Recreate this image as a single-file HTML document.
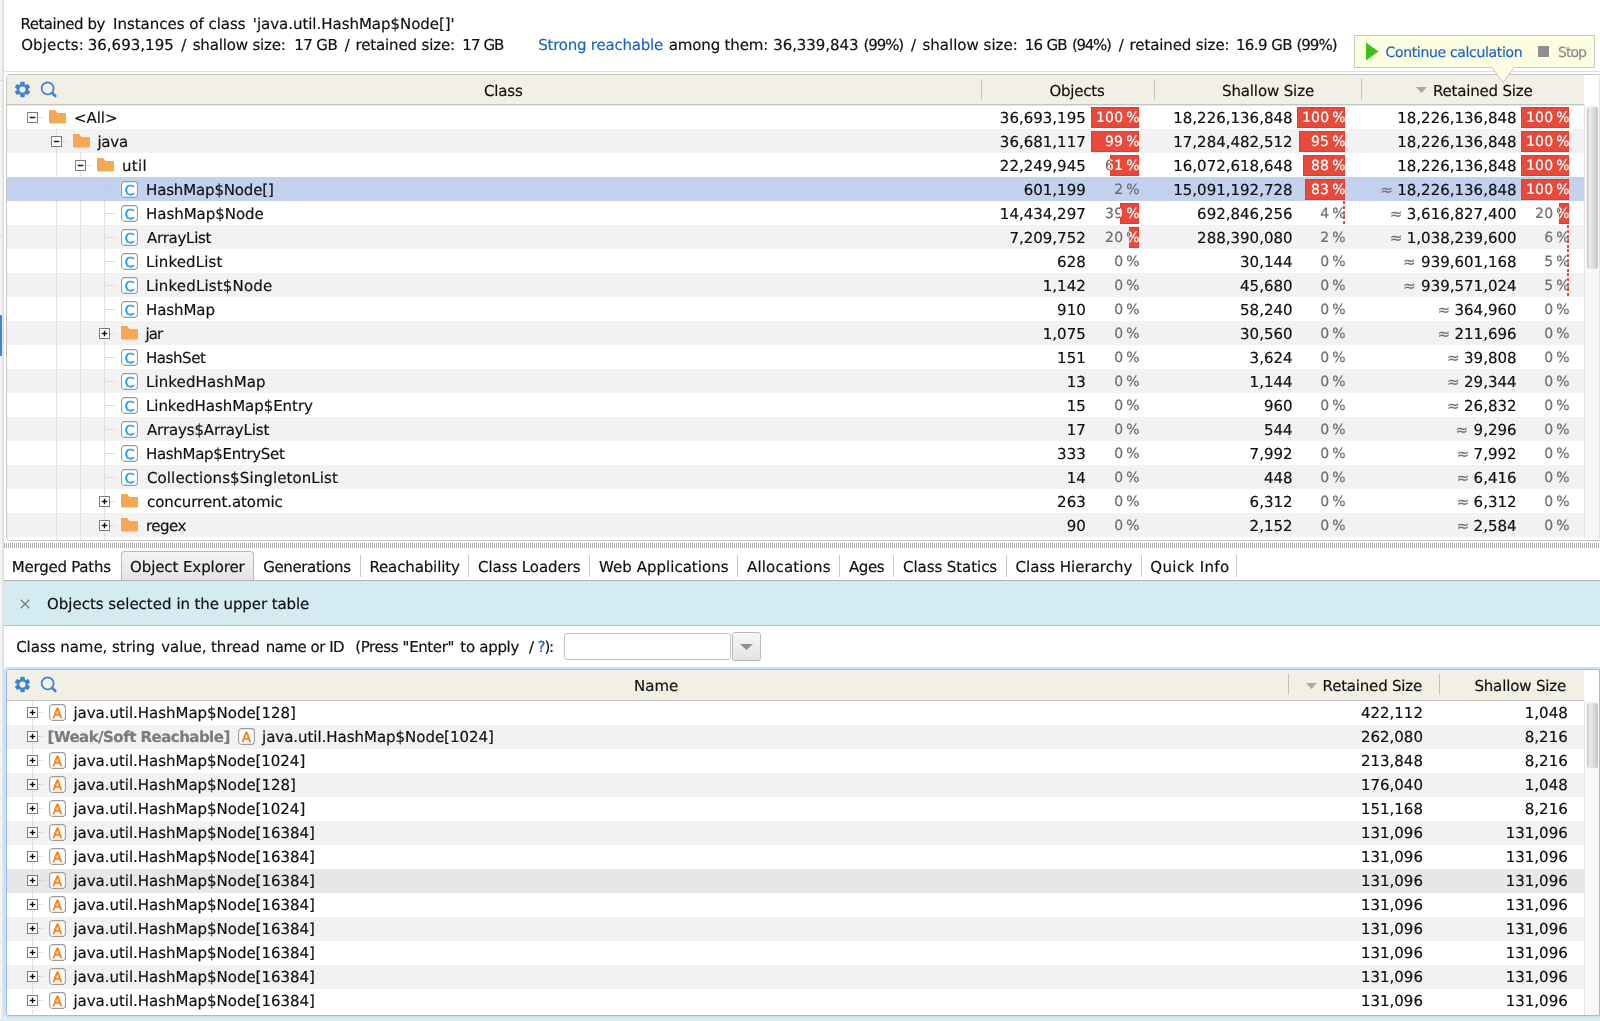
<!DOCTYPE html><html><head><meta charset="utf-8"><title>Retained objects</title><style>
html,body{margin:0;padding:0;background:#fff;}
body{width:1600px;height:1021px;position:relative;overflow:hidden;font-family:"DejaVu Sans", "Liberation Sans", sans-serif;font-size:15px;color:#101010;text-rendering:geometricPrecision;}
#root{position:absolute;left:0;top:0;width:1600px;height:1021px;will-change:transform;background:#fff;}
.a{position:absolute;}
.i{position:absolute;display:block;}
.x{position:absolute;white-space:pre;line-height:20px;height:20px;-webkit-text-stroke:0.18px currentColor;}
.bar{position:absolute;height:21px;background:#e8493b;overflow:hidden;box-shadow:inset 0 0 0 1px #e63a2a;}
.dash{position:absolute;height:24px;width:2px;background:repeating-linear-gradient(to bottom,#e8493b 0,#e8493b 3px,transparent 3px,transparent 5px);}
.hsep{position:absolute;width:1px;background:#c2c0b8;}
.tsep{position:absolute;top:555px;height:22px;width:1px;background:#c9c9c9;}
.vdot{position:absolute;width:1px;background:repeating-linear-gradient(to bottom,#c9c9c9 0,#c9c9c9 1px,transparent 1px,transparent 2px);}
.hdot{position:absolute;height:1px;background:repeating-linear-gradient(to right,#c9c9c9 0,#c9c9c9 1px,transparent 1px,transparent 2px);}

</style></head><body><div id="root">
<div class="a" style="left:0;top:0;width:2px;height:1021px;background:#f3f3f3"></div>
<div class="a" style="left:2px;top:0;width:2px;height:1021px;background:linear-gradient(to right,#e6e6e6,#dcdcdc)"></div>
<div class="a" style="left:0;top:80px;width:3px;height:1px;background:#dadada"></div>
<div class="a" style="left:0;top:235px;width:3px;height:1px;background:#dadada"></div>
<div class="a" style="left:4px;top:71px;width:1596px;height:1px;background:#dedede"></div>
<div class="a" style="left:0;top:315px;width:2px;height:41px;background:#3f84d9"></div>
<div class="x" style="left:20.40px;top:14.01px;letter-spacing:-0.466px">Retained by</div>
<div class="x" style="left:113.00px;top:14.01px;letter-spacing:-0.014px">Instances of class</div>
<div class="x" style="left:252.80px;top:14.01px;letter-spacing:-0.034px">&#x27;java.util.HashMap$Node[]&#x27;</div>
<div class="x" style="left:21.20px;top:35.01px;letter-spacing:0.119px">Objects:</div>
<div class="x" style="left:87.70px;top:35.01px;letter-spacing:0.018px">36,693,195</div>
<div class="x" style="left:181.20px;top:35.01px">/</div>
<div class="x" style="left:192.70px;top:35.01px;letter-spacing:-0.171px">shallow size:</div>
<div class="x" style="left:294.30px;top:35.01px;letter-spacing:-0.595px">17 GB</div>
<div class="x" style="left:344.70px;top:35.01px">/</div>
<div class="x" style="left:355.50px;top:35.01px;letter-spacing:-0.147px">retained size:</div>
<div class="x" style="left:462.30px;top:35.01px;letter-spacing:-0.920px">17 GB</div>
<div class="x" style="left:538.20px;top:35.01px;color:#1b64c6;letter-spacing:-0.220px">Strong reachable</div>
<div class="x" style="left:668.80px;top:35.01px;letter-spacing:-0.161px">among them:</div>
<div class="x" style="left:773.20px;top:35.01px;letter-spacing:-0.060px">36,339,843</div>
<div class="x" style="left:863.50px;top:35.01px;letter-spacing:-1.098px">(99%)</div>
<div class="x" style="left:911.10px;top:35.01px">/</div>
<div class="x" style="left:922.50px;top:35.01px;letter-spacing:0.004px">shallow size:</div>
<div class="x" style="left:1024.70px;top:35.01px;letter-spacing:-0.720px">16 GB</div>
<div class="x" style="left:1072.00px;top:35.01px;letter-spacing:-1.298px">(94%)</div>
<div class="x" style="left:1118.80px;top:35.01px">/</div>
<div class="x" style="left:1129.60px;top:35.01px;letter-spacing:-0.117px">retained size:</div>
<div class="x" style="left:1235.90px;top:35.01px;letter-spacing:-0.565px">16.9 GB</div>
<div class="x" style="left:1296.40px;top:35.01px;letter-spacing:-0.973px">(99%)</div>
<div class="a" style="left:6px;top:74px;width:1594px;height:467px;border:1px solid #c4c4c4;border-right-color:#e4e4e4;border-radius:5px 0 0 5px;box-sizing:border-box;background:#fff;overflow:hidden">
<div class="a" style="left:0;top:0;width:1577px;height:29px;background:#f2efe4"></div>
<div class="a" style="left:0;top:29px;width:1577px;height:1px;background:#c4c4c4"></div>
<div class="a" style="left:0;top:30px;width:1577px;height:1px;background:#e6e6e6"></div>
</div>
<svg class="i" style="left:13.75px;top:80.9px" width="17" height="17" viewBox="0 0 17 17"><g fill="#3b83d6"><rect x="6.3" y="0.8" width="4.4" height="15.4" rx="0.8" transform="rotate(0 8.5 8.5)"/><rect x="6.3" y="0.8" width="4.4" height="15.4" rx="0.8" transform="rotate(60 8.5 8.5)"/><rect x="6.3" y="0.8" width="4.4" height="15.4" rx="0.8" transform="rotate(120 8.5 8.5)"/><circle cx="8.5" cy="8.5" r="5.7"/></g><circle cx="8.5" cy="8.5" r="3.1" fill="#f2efe4"/></svg>
<svg class="i" style="left:40px;top:81px" width="18" height="18" viewBox="0 0 18 18"><circle cx="7.65" cy="7.4" r="6.0" fill="none" stroke="#3b83d6" stroke-width="1.7"/><path d="M12.2 11.9 L15.3 15" stroke="#3b83d6" stroke-width="2.6" stroke-linecap="round"/></svg>
<div class="x" style="left:484.00px;top:81.01px;letter-spacing:-0.162px">Class</div>
<div class="x" style="left:1049.40px;top:81.01px;letter-spacing:-0.209px">Objects</div>
<div class="x" style="left:1222.00px;top:81.01px;letter-spacing:-0.130px">Shallow Size</div>
<div class="x" style="left:1433.00px;top:81.01px;letter-spacing:-0.192px">Retained Size</div>
<svg class="i" style="left:1416px;top:87px" width="11" height="6" viewBox="0 0 11 6"><path d="M0 0H11L5.5 6Z" fill="#a9a9a9"/></svg>
<div class="hsep" style="left:981px;top:79px;height:21px"></div>
<div class="hsep" style="left:1154px;top:79px;height:21px"></div>
<div class="hsep" style="left:1361px;top:79px;height:21px"></div>
<div class="a" style="left:7px;top:129px;width:1577px;height:24px;background:#f2f2f2"></div>
<div class="a" style="left:7px;top:177px;width:1577px;height:24px;background:#c1d1ee"></div>
<div class="a" style="left:7px;top:225px;width:1577px;height:24px;background:#f2f2f2"></div>
<div class="a" style="left:7px;top:273px;width:1577px;height:24px;background:#f2f2f2"></div>
<div class="a" style="left:7px;top:321px;width:1577px;height:24px;background:#f2f2f2"></div>
<div class="a" style="left:7px;top:369px;width:1577px;height:24px;background:#f2f2f2"></div>
<div class="a" style="left:7px;top:417px;width:1577px;height:24px;background:#f2f2f2"></div>
<div class="a" style="left:7px;top:465px;width:1577px;height:24px;background:#f2f2f2"></div>
<div class="a" style="left:7px;top:513px;width:1577px;height:24px;background:#f2f2f2"></div>
<div class="vdot" style="left:56px;top:129px;height:411px"></div>
<div class="vdot" style="left:80px;top:153px;height:387px"></div>
<div class="vdot" style="left:104px;top:177px;height:363px"></div>
<svg class="i" style="left:27px;top:112px" width="11" height="11" viewBox="0 0 11 11"><rect x="0.5" y="0.5" width="10" height="10" fill="#fff" stroke="#7c7c7c" stroke-width="1"/><path d="M2.7 5.5h5.6" stroke="#111" stroke-width="1.4"/></svg>
<div class="hdot" style="left:39px;top:117px;width:6px"></div>
<svg class="i" style="left:49px;top:110px" width="17" height="14" viewBox="0 0 17 14"><path d="M0 0.9 Q0 0 0.9 0 H5.6 Q6.4 0 6.9 0.7 L8.4 3 H16.2 Q17 3 17 3.8 V12.6 Q17 13.4 16.2 13.4 H0.8 Q0 13.4 0 12.6 Z" fill="#f4a853"/></svg>
<div class="x" style="left:74.00px;top:108.01px;letter-spacing:-0.041px">&lt;All&gt;</div>
<div class="x" style="right:514.26px;top:108.01px">36,693,195</div>
<div class="x" style="right:460.20px;top:108.35px;font-size:14px;color:#6c6c6c;letter-spacing:0.200px;word-spacing:-1.6px">100 %</div>
<div class="bar" style="left:1091px;top:107px;width:48px">
<div class="x" style="right:-0.80px;top:1.35px;font-size:14px;color:#fff;letter-spacing:0.2px;word-spacing:-1.6px">100 %</div>
</div>
<div class="x" style="right:307.46px;top:108.01px">18,226,136,848</div>
<div class="x" style="right:254.20px;top:108.35px;font-size:14px;color:#6c6c6c;letter-spacing:0.200px;word-spacing:-1.6px">100 %</div>
<div class="bar" style="left:1297px;top:107px;width:48px">
<div class="x" style="right:-0.80px;top:1.35px;font-size:14px;color:#fff;letter-spacing:0.2px;word-spacing:-1.6px">100 %</div>
</div>
<div class="x" style="right:83.46px;top:108.01px">18,226,136,848</div>
<div class="x" style="right:30.20px;top:108.35px;font-size:14px;color:#6c6c6c;letter-spacing:0.200px;word-spacing:-1.6px">100 %</div>
<div class="bar" style="left:1521px;top:107px;width:48px">
<div class="x" style="right:-0.80px;top:1.35px;font-size:14px;color:#fff;letter-spacing:0.2px;word-spacing:-1.6px">100 %</div>
</div>
<svg class="i" style="left:51px;top:136px" width="11" height="11" viewBox="0 0 11 11"><rect x="0.5" y="0.5" width="10" height="10" fill="#fff" stroke="#7c7c7c" stroke-width="1"/><path d="M2.7 5.5h5.6" stroke="#111" stroke-width="1.4"/></svg>
<div class="hdot" style="left:63px;top:141px;width:6px"></div>
<svg class="i" style="left:73px;top:134px" width="17" height="14" viewBox="0 0 17 14"><path d="M0 0.9 Q0 0 0.9 0 H5.6 Q6.4 0 6.9 0.7 L8.4 3 H16.2 Q17 3 17 3.8 V12.6 Q17 13.4 16.2 13.4 H0.8 Q0 13.4 0 12.6 Z" fill="#f4a853"/></svg>
<div class="x" style="left:97.40px;top:132.01px;letter-spacing:-0.212px">java</div>
<div class="x" style="right:514.26px;top:132.01px">36,681,117</div>
<div class="x" style="right:460.20px;top:132.35px;font-size:14px;color:#6c6c6c;letter-spacing:0.200px;word-spacing:-1.6px">99 %</div>
<div class="bar" style="left:1091px;top:131px;width:48px">
<div class="x" style="right:-0.80px;top:1.35px;font-size:14px;color:#fff;letter-spacing:0.2px;word-spacing:-1.6px">99 %</div>
</div>
<div class="x" style="right:307.46px;top:132.01px">17,284,482,512</div>
<div class="x" style="right:254.20px;top:132.35px;font-size:14px;color:#6c6c6c;letter-spacing:0.200px;word-spacing:-1.6px">95 %</div>
<div class="bar" style="left:1299px;top:131px;width:46px">
<div class="x" style="right:-0.80px;top:1.35px;font-size:14px;color:#fff;letter-spacing:0.2px;word-spacing:-1.6px">95 %</div>
</div>
<div class="x" style="right:83.46px;top:132.01px">18,226,136,848</div>
<div class="x" style="right:30.20px;top:132.35px;font-size:14px;color:#6c6c6c;letter-spacing:0.200px;word-spacing:-1.6px">100 %</div>
<div class="bar" style="left:1521px;top:131px;width:48px">
<div class="x" style="right:-0.80px;top:1.35px;font-size:14px;color:#fff;letter-spacing:0.2px;word-spacing:-1.6px">100 %</div>
</div>
<svg class="i" style="left:75px;top:160px" width="11" height="11" viewBox="0 0 11 11"><rect x="0.5" y="0.5" width="10" height="10" fill="#fff" stroke="#7c7c7c" stroke-width="1"/><path d="M2.7 5.5h5.6" stroke="#111" stroke-width="1.4"/></svg>
<div class="hdot" style="left:87px;top:165px;width:6px"></div>
<svg class="i" style="left:97px;top:158px" width="17" height="14" viewBox="0 0 17 14"><path d="M0 0.9 Q0 0 0.9 0 H5.6 Q6.4 0 6.9 0.7 L8.4 3 H16.2 Q17 3 17 3.8 V12.6 Q17 13.4 16.2 13.4 H0.8 Q0 13.4 0 12.6 Z" fill="#f4a853"/></svg>
<div class="x" style="left:122.00px;top:156.01px;letter-spacing:0.348px">util</div>
<div class="x" style="right:514.26px;top:156.01px">22,249,945</div>
<div class="x" style="right:460.20px;top:156.35px;font-size:14px;color:#6c6c6c;letter-spacing:0.200px;word-spacing:-1.6px">61 %</div>
<div class="bar" style="left:1110px;top:155px;width:29px">
<div class="x" style="right:-0.80px;top:1.35px;font-size:14px;color:#fff;letter-spacing:0.2px;word-spacing:-1.6px">61 %</div>
</div>
<div class="x" style="right:307.46px;top:156.01px">16,072,618,648</div>
<div class="x" style="right:254.20px;top:156.35px;font-size:14px;color:#6c6c6c;letter-spacing:0.200px;word-spacing:-1.6px">88 %</div>
<div class="bar" style="left:1303px;top:155px;width:42px">
<div class="x" style="right:-0.80px;top:1.35px;font-size:14px;color:#fff;letter-spacing:0.2px;word-spacing:-1.6px">88 %</div>
</div>
<div class="x" style="right:83.46px;top:156.01px">18,226,136,848</div>
<div class="x" style="right:30.20px;top:156.35px;font-size:14px;color:#6c6c6c;letter-spacing:0.200px;word-spacing:-1.6px">100 %</div>
<div class="bar" style="left:1521px;top:155px;width:48px">
<div class="x" style="right:-0.80px;top:1.35px;font-size:14px;color:#fff;letter-spacing:0.2px;word-spacing:-1.6px">100 %</div>
</div>
<div class="hdot" style="left:105px;top:189px;width:12px"></div>
<svg class="i" style="left:121px;top:181px" width="17" height="17" viewBox="0 0 17 17"><rect x="0.6" y="0.6" width="15.8" height="15.8" rx="3.2" fill="#fff" stroke="#9a9a9a" stroke-width="1.1"/><text x="8.4" y="13.7" text-anchor="middle" font-family='"DejaVu Sans", "Liberation Sans", sans-serif' font-size="13.6" fill="#1fa3f6" stroke="#1fa3f6" stroke-width="0.55">C</text></svg>
<div class="x" style="left:146.00px;top:180.01px;letter-spacing:-0.153px">HashMap$Node[]</div>
<div class="x" style="right:514.26px;top:180.01px">601,199</div>
<div class="x" style="right:460.20px;top:180.35px;font-size:14px;color:#6c6c6c;letter-spacing:0.200px;word-spacing:-1.6px">2 %</div>
<div class="x" style="right:307.46px;top:180.01px">15,091,192,728</div>
<div class="x" style="right:254.20px;top:180.35px;font-size:14px;color:#6c6c6c;letter-spacing:0.200px;word-spacing:-1.6px">83 %</div>
<div class="bar" style="left:1305px;top:179px;width:40px">
<div class="x" style="right:-0.80px;top:1.35px;font-size:14px;color:#fff;letter-spacing:0.2px;word-spacing:-1.6px">83 %</div>
</div>
<div class="x" style="right:83.46px;top:180.01px">18,226,136,848</div>
<div class="x" style="right:207.17px;top:180.01px;color:#707070">≈</div>
<div class="x" style="right:30.20px;top:180.35px;font-size:14px;color:#6c6c6c;letter-spacing:0.200px;word-spacing:-1.6px">100 %</div>
<div class="bar" style="left:1521px;top:179px;width:48px">
<div class="x" style="right:-0.80px;top:1.35px;font-size:14px;color:#fff;letter-spacing:0.2px;word-spacing:-1.6px">100 %</div>
</div>
<div class="hdot" style="left:105px;top:213px;width:12px"></div>
<svg class="i" style="left:121px;top:205px" width="17" height="17" viewBox="0 0 17 17"><rect x="0.6" y="0.6" width="15.8" height="15.8" rx="3.2" fill="#fff" stroke="#9a9a9a" stroke-width="1.1"/><text x="8.4" y="13.7" text-anchor="middle" font-family='"DejaVu Sans", "Liberation Sans", sans-serif' font-size="13.6" fill="#1fa3f6" stroke="#1fa3f6" stroke-width="0.55">C</text></svg>
<div class="x" style="left:146.00px;top:204.01px;letter-spacing:-0.028px">HashMap$Node</div>
<div class="x" style="right:514.26px;top:204.01px">14,434,297</div>
<div class="x" style="right:460.20px;top:204.35px;font-size:14px;color:#6c6c6c;letter-spacing:0.200px;word-spacing:-1.6px">39 %</div>
<div class="bar" style="left:1120px;top:203px;width:19px">
<div class="x" style="right:-0.80px;top:1.35px;font-size:14px;color:#fff;letter-spacing:0.2px;word-spacing:-1.6px">39 %</div>
</div>
<div class="x" style="right:307.46px;top:204.01px">692,846,256</div>
<div class="x" style="right:254.20px;top:204.35px;font-size:14px;color:#6c6c6c;letter-spacing:0.200px;word-spacing:-1.6px">4 %</div>
<div class="dash" style="left:1343px;top:201px"></div>
<div class="x" style="right:83.46px;top:204.01px">3,616,827,400</div>
<div class="x" style="right:197.63px;top:204.01px;color:#707070">≈</div>
<div class="x" style="right:30.20px;top:204.35px;font-size:14px;color:#6c6c6c;letter-spacing:0.200px;word-spacing:-1.6px">20 %</div>
<div class="bar" style="left:1559px;top:203px;width:10px">
<div class="x" style="right:-0.80px;top:1.35px;font-size:14px;color:#fff;letter-spacing:0.2px;word-spacing:-1.6px">20 %</div>
</div>
<div class="hdot" style="left:105px;top:237px;width:12px"></div>
<svg class="i" style="left:121px;top:229px" width="17" height="17" viewBox="0 0 17 17"><rect x="0.6" y="0.6" width="15.8" height="15.8" rx="3.2" fill="#fff" stroke="#9a9a9a" stroke-width="1.1"/><text x="8.4" y="13.7" text-anchor="middle" font-family='"DejaVu Sans", "Liberation Sans", sans-serif' font-size="13.6" fill="#1fa3f6" stroke="#1fa3f6" stroke-width="0.55">C</text></svg>
<div class="x" style="left:147.00px;top:228.01px;letter-spacing:-0.267px">ArrayList</div>
<div class="x" style="right:514.26px;top:228.01px">7,209,752</div>
<div class="x" style="right:460.20px;top:228.35px;font-size:14px;color:#6c6c6c;letter-spacing:0.200px;word-spacing:-1.6px">20 %</div>
<div class="bar" style="left:1129px;top:227px;width:10px">
<div class="x" style="right:-0.80px;top:1.35px;font-size:14px;color:#fff;letter-spacing:0.2px;word-spacing:-1.6px">20 %</div>
</div>
<div class="x" style="right:307.46px;top:228.01px">288,390,080</div>
<div class="x" style="right:254.20px;top:228.35px;font-size:14px;color:#6c6c6c;letter-spacing:0.200px;word-spacing:-1.6px">2 %</div>
<div class="x" style="right:83.46px;top:228.01px">1,038,239,600</div>
<div class="x" style="right:197.63px;top:228.01px;color:#707070">≈</div>
<div class="x" style="right:30.20px;top:228.35px;font-size:14px;color:#6c6c6c;letter-spacing:0.200px;word-spacing:-1.6px">6 %</div>
<div class="dash" style="left:1567px;top:225px"></div>
<div class="hdot" style="left:105px;top:261px;width:12px"></div>
<svg class="i" style="left:121px;top:253px" width="17" height="17" viewBox="0 0 17 17"><rect x="0.6" y="0.6" width="15.8" height="15.8" rx="3.2" fill="#fff" stroke="#9a9a9a" stroke-width="1.1"/><text x="8.4" y="13.7" text-anchor="middle" font-family='"DejaVu Sans", "Liberation Sans", sans-serif' font-size="13.6" fill="#1fa3f6" stroke="#1fa3f6" stroke-width="0.55">C</text></svg>
<div class="x" style="left:146.00px;top:252.01px;letter-spacing:0.125px">LinkedList</div>
<div class="x" style="right:514.26px;top:252.01px">628</div>
<div class="x" style="right:460.20px;top:252.35px;font-size:14px;color:#6c6c6c;letter-spacing:0.200px;word-spacing:-1.6px">0 %</div>
<div class="x" style="right:307.46px;top:252.01px">30,144</div>
<div class="x" style="right:254.20px;top:252.35px;font-size:14px;color:#6c6c6c;letter-spacing:0.200px;word-spacing:-1.6px">0 %</div>
<div class="x" style="right:83.46px;top:252.01px">939,601,168</div>
<div class="x" style="right:184.32px;top:252.01px;color:#707070">≈</div>
<div class="x" style="right:30.20px;top:252.35px;font-size:14px;color:#6c6c6c;letter-spacing:0.200px;word-spacing:-1.6px">5 %</div>
<div class="dash" style="left:1567px;top:249px"></div>
<div class="hdot" style="left:105px;top:285px;width:12px"></div>
<svg class="i" style="left:121px;top:277px" width="17" height="17" viewBox="0 0 17 17"><rect x="0.6" y="0.6" width="15.8" height="15.8" rx="3.2" fill="#fff" stroke="#9a9a9a" stroke-width="1.1"/><text x="8.4" y="13.7" text-anchor="middle" font-family='"DejaVu Sans", "Liberation Sans", sans-serif' font-size="13.6" fill="#1fa3f6" stroke="#1fa3f6" stroke-width="0.55">C</text></svg>
<div class="x" style="left:146.00px;top:276.01px;letter-spacing:0.170px">LinkedList$Node</div>
<div class="x" style="right:514.26px;top:276.01px">1,142</div>
<div class="x" style="right:460.20px;top:276.35px;font-size:14px;color:#6c6c6c;letter-spacing:0.200px;word-spacing:-1.6px">0 %</div>
<div class="x" style="right:307.46px;top:276.01px">45,680</div>
<div class="x" style="right:254.20px;top:276.35px;font-size:14px;color:#6c6c6c;letter-spacing:0.200px;word-spacing:-1.6px">0 %</div>
<div class="x" style="right:83.46px;top:276.01px">939,571,024</div>
<div class="x" style="right:184.32px;top:276.01px;color:#707070">≈</div>
<div class="x" style="right:30.20px;top:276.35px;font-size:14px;color:#6c6c6c;letter-spacing:0.200px;word-spacing:-1.6px">5 %</div>
<div class="dash" style="left:1567px;top:273px"></div>
<div class="hdot" style="left:105px;top:309px;width:12px"></div>
<svg class="i" style="left:121px;top:301px" width="17" height="17" viewBox="0 0 17 17"><rect x="0.6" y="0.6" width="15.8" height="15.8" rx="3.2" fill="#fff" stroke="#9a9a9a" stroke-width="1.1"/><text x="8.4" y="13.7" text-anchor="middle" font-family='"DejaVu Sans", "Liberation Sans", sans-serif' font-size="13.6" fill="#1fa3f6" stroke="#1fa3f6" stroke-width="0.55">C</text></svg>
<div class="x" style="left:146.00px;top:300.01px;letter-spacing:-0.088px">HashMap</div>
<div class="x" style="right:514.26px;top:300.01px">910</div>
<div class="x" style="right:460.20px;top:300.35px;font-size:14px;color:#6c6c6c;letter-spacing:0.200px;word-spacing:-1.6px">0 %</div>
<div class="x" style="right:307.46px;top:300.01px">58,240</div>
<div class="x" style="right:254.20px;top:300.35px;font-size:14px;color:#6c6c6c;letter-spacing:0.200px;word-spacing:-1.6px">0 %</div>
<div class="x" style="right:83.46px;top:300.01px">364,960</div>
<div class="x" style="right:149.92px;top:300.01px;color:#707070">≈</div>
<div class="x" style="right:30.20px;top:300.35px;font-size:14px;color:#6c6c6c;letter-spacing:0.200px;word-spacing:-1.6px">0 %</div>
<svg class="i" style="left:99px;top:328px" width="11" height="11" viewBox="0 0 11 11"><rect x="0.5" y="0.5" width="10" height="10" fill="#fff" stroke="#7c7c7c" stroke-width="1"/><path d="M2.7 5.5h5.6" stroke="#111" stroke-width="1.4"/><path d="M5.5 2.7v5.6" stroke="#111" stroke-width="1.4"/></svg>
<div class="hdot" style="left:111px;top:333px;width:6px"></div>
<svg class="i" style="left:121px;top:326px" width="17" height="14" viewBox="0 0 17 14"><path d="M0 0.9 Q0 0 0.9 0 H5.6 Q6.4 0 6.9 0.7 L8.4 3 H16.2 Q17 3 17 3.8 V12.6 Q17 13.4 16.2 13.4 H0.8 Q0 13.4 0 12.6 Z" fill="#f4a853"/></svg>
<div class="x" style="left:145.40px;top:324.01px;letter-spacing:-0.880px">jar</div>
<div class="x" style="right:514.26px;top:324.01px">1,075</div>
<div class="x" style="right:460.20px;top:324.35px;font-size:14px;color:#6c6c6c;letter-spacing:0.200px;word-spacing:-1.6px">0 %</div>
<div class="x" style="right:307.46px;top:324.01px">30,560</div>
<div class="x" style="right:254.20px;top:324.35px;font-size:14px;color:#6c6c6c;letter-spacing:0.200px;word-spacing:-1.6px">0 %</div>
<div class="x" style="right:83.46px;top:324.01px">211,696</div>
<div class="x" style="right:149.92px;top:324.01px;color:#707070">≈</div>
<div class="x" style="right:30.20px;top:324.35px;font-size:14px;color:#6c6c6c;letter-spacing:0.200px;word-spacing:-1.6px">0 %</div>
<div class="hdot" style="left:105px;top:357px;width:12px"></div>
<svg class="i" style="left:121px;top:349px" width="17" height="17" viewBox="0 0 17 17"><rect x="0.6" y="0.6" width="15.8" height="15.8" rx="3.2" fill="#fff" stroke="#9a9a9a" stroke-width="1.1"/><text x="8.4" y="13.7" text-anchor="middle" font-family='"DejaVu Sans", "Liberation Sans", sans-serif' font-size="13.6" fill="#1fa3f6" stroke="#1fa3f6" stroke-width="0.55">C</text></svg>
<div class="x" style="left:146.00px;top:348.01px;letter-spacing:-0.424px">HashSet</div>
<div class="x" style="right:514.26px;top:348.01px">151</div>
<div class="x" style="right:460.20px;top:348.35px;font-size:14px;color:#6c6c6c;letter-spacing:0.200px;word-spacing:-1.6px">0 %</div>
<div class="x" style="right:307.46px;top:348.01px">3,624</div>
<div class="x" style="right:254.20px;top:348.35px;font-size:14px;color:#6c6c6c;letter-spacing:0.200px;word-spacing:-1.6px">0 %</div>
<div class="x" style="right:83.46px;top:348.01px">39,808</div>
<div class="x" style="right:140.37px;top:348.01px;color:#707070">≈</div>
<div class="x" style="right:30.20px;top:348.35px;font-size:14px;color:#6c6c6c;letter-spacing:0.200px;word-spacing:-1.6px">0 %</div>
<div class="hdot" style="left:105px;top:381px;width:12px"></div>
<svg class="i" style="left:121px;top:373px" width="17" height="17" viewBox="0 0 17 17"><rect x="0.6" y="0.6" width="15.8" height="15.8" rx="3.2" fill="#fff" stroke="#9a9a9a" stroke-width="1.1"/><text x="8.4" y="13.7" text-anchor="middle" font-family='"DejaVu Sans", "Liberation Sans", sans-serif' font-size="13.6" fill="#1fa3f6" stroke="#1fa3f6" stroke-width="0.55">C</text></svg>
<div class="x" style="left:146.00px;top:372.01px;letter-spacing:0.095px">LinkedHashMap</div>
<div class="x" style="right:514.26px;top:372.01px">13</div>
<div class="x" style="right:460.20px;top:372.35px;font-size:14px;color:#6c6c6c;letter-spacing:0.200px;word-spacing:-1.6px">0 %</div>
<div class="x" style="right:307.46px;top:372.01px">1,144</div>
<div class="x" style="right:254.20px;top:372.35px;font-size:14px;color:#6c6c6c;letter-spacing:0.200px;word-spacing:-1.6px">0 %</div>
<div class="x" style="right:83.46px;top:372.01px">29,344</div>
<div class="x" style="right:140.37px;top:372.01px;color:#707070">≈</div>
<div class="x" style="right:30.20px;top:372.35px;font-size:14px;color:#6c6c6c;letter-spacing:0.200px;word-spacing:-1.6px">0 %</div>
<div class="hdot" style="left:105px;top:405px;width:12px"></div>
<svg class="i" style="left:121px;top:397px" width="17" height="17" viewBox="0 0 17 17"><rect x="0.6" y="0.6" width="15.8" height="15.8" rx="3.2" fill="#fff" stroke="#9a9a9a" stroke-width="1.1"/><text x="8.4" y="13.7" text-anchor="middle" font-family='"DejaVu Sans", "Liberation Sans", sans-serif' font-size="13.6" fill="#1fa3f6" stroke="#1fa3f6" stroke-width="0.55">C</text></svg>
<div class="x" style="left:146.00px;top:396.01px;letter-spacing:-0.053px">LinkedHashMap$Entry</div>
<div class="x" style="right:514.26px;top:396.01px">15</div>
<div class="x" style="right:460.20px;top:396.35px;font-size:14px;color:#6c6c6c;letter-spacing:0.200px;word-spacing:-1.6px">0 %</div>
<div class="x" style="right:307.46px;top:396.01px">960</div>
<div class="x" style="right:254.20px;top:396.35px;font-size:14px;color:#6c6c6c;letter-spacing:0.200px;word-spacing:-1.6px">0 %</div>
<div class="x" style="right:83.46px;top:396.01px">26,832</div>
<div class="x" style="right:140.37px;top:396.01px;color:#707070">≈</div>
<div class="x" style="right:30.20px;top:396.35px;font-size:14px;color:#6c6c6c;letter-spacing:0.200px;word-spacing:-1.6px">0 %</div>
<div class="hdot" style="left:105px;top:429px;width:12px"></div>
<svg class="i" style="left:121px;top:421px" width="17" height="17" viewBox="0 0 17 17"><rect x="0.6" y="0.6" width="15.8" height="15.8" rx="3.2" fill="#fff" stroke="#9a9a9a" stroke-width="1.1"/><text x="8.4" y="13.7" text-anchor="middle" font-family='"DejaVu Sans", "Liberation Sans", sans-serif' font-size="13.6" fill="#1fa3f6" stroke="#1fa3f6" stroke-width="0.55">C</text></svg>
<div class="x" style="left:147.00px;top:420.01px;letter-spacing:-0.140px">Arrays$ArrayList</div>
<div class="x" style="right:514.26px;top:420.01px">17</div>
<div class="x" style="right:460.20px;top:420.35px;font-size:14px;color:#6c6c6c;letter-spacing:0.200px;word-spacing:-1.6px">0 %</div>
<div class="x" style="right:307.46px;top:420.01px">544</div>
<div class="x" style="right:254.20px;top:420.35px;font-size:14px;color:#6c6c6c;letter-spacing:0.200px;word-spacing:-1.6px">0 %</div>
<div class="x" style="right:83.46px;top:420.01px">9,296</div>
<div class="x" style="right:131.83px;top:420.01px;color:#707070">≈</div>
<div class="x" style="right:30.20px;top:420.35px;font-size:14px;color:#6c6c6c;letter-spacing:0.200px;word-spacing:-1.6px">0 %</div>
<div class="hdot" style="left:105px;top:453px;width:12px"></div>
<svg class="i" style="left:121px;top:445px" width="17" height="17" viewBox="0 0 17 17"><rect x="0.6" y="0.6" width="15.8" height="15.8" rx="3.2" fill="#fff" stroke="#9a9a9a" stroke-width="1.1"/><text x="8.4" y="13.7" text-anchor="middle" font-family='"DejaVu Sans", "Liberation Sans", sans-serif' font-size="13.6" fill="#1fa3f6" stroke="#1fa3f6" stroke-width="0.55">C</text></svg>
<div class="x" style="left:146.00px;top:444.01px;letter-spacing:-0.310px">HashMap$EntrySet</div>
<div class="x" style="right:514.26px;top:444.01px">333</div>
<div class="x" style="right:460.20px;top:444.35px;font-size:14px;color:#6c6c6c;letter-spacing:0.200px;word-spacing:-1.6px">0 %</div>
<div class="x" style="right:307.46px;top:444.01px">7,992</div>
<div class="x" style="right:254.20px;top:444.35px;font-size:14px;color:#6c6c6c;letter-spacing:0.200px;word-spacing:-1.6px">0 %</div>
<div class="x" style="right:83.46px;top:444.01px">7,992</div>
<div class="x" style="right:130.83px;top:444.01px;color:#707070">≈</div>
<div class="x" style="right:30.20px;top:444.35px;font-size:14px;color:#6c6c6c;letter-spacing:0.200px;word-spacing:-1.6px">0 %</div>
<div class="hdot" style="left:105px;top:477px;width:12px"></div>
<svg class="i" style="left:121px;top:469px" width="17" height="17" viewBox="0 0 17 17"><rect x="0.6" y="0.6" width="15.8" height="15.8" rx="3.2" fill="#fff" stroke="#9a9a9a" stroke-width="1.1"/><text x="8.4" y="13.7" text-anchor="middle" font-family='"DejaVu Sans", "Liberation Sans", sans-serif' font-size="13.6" fill="#1fa3f6" stroke="#1fa3f6" stroke-width="0.55">C</text></svg>
<div class="x" style="left:147.00px;top:468.01px;letter-spacing:0.101px">Collections$SingletonList</div>
<div class="x" style="right:514.26px;top:468.01px">14</div>
<div class="x" style="right:460.20px;top:468.35px;font-size:14px;color:#6c6c6c;letter-spacing:0.200px;word-spacing:-1.6px">0 %</div>
<div class="x" style="right:307.46px;top:468.01px">448</div>
<div class="x" style="right:254.20px;top:468.35px;font-size:14px;color:#6c6c6c;letter-spacing:0.200px;word-spacing:-1.6px">0 %</div>
<div class="x" style="right:83.46px;top:468.01px">6,416</div>
<div class="x" style="right:130.83px;top:468.01px;color:#707070">≈</div>
<div class="x" style="right:30.20px;top:468.35px;font-size:14px;color:#6c6c6c;letter-spacing:0.200px;word-spacing:-1.6px">0 %</div>
<svg class="i" style="left:99px;top:496px" width="11" height="11" viewBox="0 0 11 11"><rect x="0.5" y="0.5" width="10" height="10" fill="#fff" stroke="#7c7c7c" stroke-width="1"/><path d="M2.7 5.5h5.6" stroke="#111" stroke-width="1.4"/><path d="M5.5 2.7v5.6" stroke="#111" stroke-width="1.4"/></svg>
<div class="hdot" style="left:111px;top:501px;width:6px"></div>
<svg class="i" style="left:121px;top:494px" width="17" height="14" viewBox="0 0 17 14"><path d="M0 0.9 Q0 0 0.9 0 H5.6 Q6.4 0 6.9 0.7 L8.4 3 H16.2 Q17 3 17 3.8 V12.6 Q17 13.4 16.2 13.4 H0.8 Q0 13.4 0 12.6 Z" fill="#f4a853"/></svg>
<div class="x" style="left:147.00px;top:492.01px;letter-spacing:-0.078px">concurrent.atomic</div>
<div class="x" style="right:514.26px;top:492.01px">263</div>
<div class="x" style="right:460.20px;top:492.35px;font-size:14px;color:#6c6c6c;letter-spacing:0.200px;word-spacing:-1.6px">0 %</div>
<div class="x" style="right:307.46px;top:492.01px">6,312</div>
<div class="x" style="right:254.20px;top:492.35px;font-size:14px;color:#6c6c6c;letter-spacing:0.200px;word-spacing:-1.6px">0 %</div>
<div class="x" style="right:83.46px;top:492.01px">6,312</div>
<div class="x" style="right:130.83px;top:492.01px;color:#707070">≈</div>
<div class="x" style="right:30.20px;top:492.35px;font-size:14px;color:#6c6c6c;letter-spacing:0.200px;word-spacing:-1.6px">0 %</div>
<svg class="i" style="left:99px;top:520px" width="11" height="11" viewBox="0 0 11 11"><rect x="0.5" y="0.5" width="10" height="10" fill="#fff" stroke="#7c7c7c" stroke-width="1"/><path d="M2.7 5.5h5.6" stroke="#111" stroke-width="1.4"/><path d="M5.5 2.7v5.6" stroke="#111" stroke-width="1.4"/></svg>
<div class="hdot" style="left:111px;top:525px;width:6px"></div>
<svg class="i" style="left:121px;top:518px" width="17" height="14" viewBox="0 0 17 14"><path d="M0 0.9 Q0 0 0.9 0 H5.6 Q6.4 0 6.9 0.7 L8.4 3 H16.2 Q17 3 17 3.8 V12.6 Q17 13.4 16.2 13.4 H0.8 Q0 13.4 0 12.6 Z" fill="#f4a853"/></svg>
<div class="x" style="left:146.00px;top:516.01px;letter-spacing:-0.538px">regex</div>
<div class="x" style="right:514.26px;top:516.01px">90</div>
<div class="x" style="right:460.20px;top:516.35px;font-size:14px;color:#6c6c6c;letter-spacing:0.200px;word-spacing:-1.6px">0 %</div>
<div class="x" style="right:307.46px;top:516.01px">2,152</div>
<div class="x" style="right:254.20px;top:516.35px;font-size:14px;color:#6c6c6c;letter-spacing:0.200px;word-spacing:-1.6px">0 %</div>
<div class="x" style="right:83.46px;top:516.01px">2,584</div>
<div class="x" style="right:130.83px;top:516.01px;color:#707070">≈</div>
<div class="x" style="right:30.20px;top:516.35px;font-size:14px;color:#6c6c6c;letter-spacing:0.200px;word-spacing:-1.6px">0 %</div>
<div class="a" style="left:1584px;top:105px;width:15px;height:433px;background:#f7f7f7;border-left:1px solid #e6e6e6;border-bottom:1px solid #ececec;box-sizing:border-box"></div>
<div class="a" style="left:1587px;top:107px;width:11px;height:162px;background:linear-gradient(to right,#c2c2c2,#e9e9e9 22%,#dddddd 60%,#c4c4c4);border-radius:2.5px"></div>
<div class="a" style="left:1354px;top:35px;width:241px;height:33px;box-sizing:border-box;border:1px solid #c8c8c0;background:#fdfde1"></div>
<svg class="i" style="left:1491px;top:66px" width="24" height="18" viewBox="0 0 24 18"><path d="M0 0H24V1.5H23L12 16.5 1 1.5H0Z" fill="#fdfde1"/><path d="M0 1.5 H1 L12 16.5 L23 1.5 H24" fill="none" stroke="#c8c8c0" stroke-width="1"/></svg>
<svg class="i" style="left:1366px;top:42px" width="13" height="19" viewBox="0 0 13 19"><path d="M0 0.5L12.5 9.5 0 18.5Z" fill="#3fc01a"/></svg>
<div class="x" style="left:1385.50px;top:43.35px;font-size:14px;color:#1b64c6;letter-spacing:-0.334px">Continue calculation</div>
<div class="a" style="left:1538px;top:46px;width:11px;height:11px;background:#8f8f8f"></div>
<div class="x" style="left:1558.00px;top:43.35px;font-size:14px;color:#8c8c8c;letter-spacing:-0.980px">Stop</div>
<div class="a" style="left:4px;top:543px;width:1596px;height:5px;background:repeating-linear-gradient(to right,#a2a2a2 0,#a2a2a2 1px,#fff 1px,#fff 2px);opacity:0.9"></div>
<div class="a" style="left:121px;top:551px;width:133px;height:30px;box-sizing:border-box;border:1px solid #b8b8b8;border-bottom:none;border-radius:4px 4px 0 0;background:linear-gradient(#f3f3f3,#e3e3e3)"></div>
<div class="x" style="left:11.80px;top:557.01px;letter-spacing:-0.242px">Merged Paths</div>
<div class="x" style="left:130.00px;top:557.01px;letter-spacing:-0.093px">Object Explorer</div>
<div class="x" style="left:263.20px;top:557.01px;letter-spacing:-0.368px">Generations</div>
<div class="x" style="left:369.40px;top:557.01px;letter-spacing:-0.129px">Reachability</div>
<div class="x" style="left:478.00px;top:557.01px;letter-spacing:-0.068px">Class Loaders</div>
<div class="x" style="left:599.10px;top:557.01px;letter-spacing:0.021px">Web Applications</div>
<div class="x" style="left:747.00px;top:557.01px;letter-spacing:0.175px">Allocations</div>
<div class="x" style="left:849.00px;top:557.01px;letter-spacing:-0.437px">Ages</div>
<div class="x" style="left:903.00px;top:557.01px;letter-spacing:-0.068px">Class Statics</div>
<div class="x" style="left:1015.60px;top:557.01px">Class Hierarchy</div>
<div class="x" style="left:1150.30px;top:557.01px;letter-spacing:0.367px">Quick Info</div>
<div class="tsep" style="left:360px"></div>
<div class="tsep" style="left:468px"></div>
<div class="tsep" style="left:589px"></div>
<div class="tsep" style="left:737px"></div>
<div class="tsep" style="left:839px"></div>
<div class="tsep" style="left:893px"></div>
<div class="tsep" style="left:1006px"></div>
<div class="tsep" style="left:1141px"></div>
<div class="tsep" style="left:1236px"></div>
<div class="a" style="left:4px;top:580px;width:1596px;height:1px;background:#b2b2b2"></div>
<div class="a" style="left:4px;top:581px;width:1596px;height:44px;background:#d4ebf2"></div>
<div class="a" style="left:4px;top:625px;width:1596px;height:1px;background:#bdbdbd"></div>
<svg class="i" style="left:20px;top:599px" width="10" height="10" viewBox="0 0 10 10"><path d="M0.7 0.7L9.3 9.3M9.3 0.7L0.7 9.3" stroke="#7a7a7a" stroke-width="1.3"/></svg>
<div class="x" style="left:47.10px;top:594.01px;letter-spacing:-0.029px">Objects selected</div>
<div class="x" style="left:176.40px;top:594.01px;letter-spacing:-0.100px">in the upper table</div>
<div class="x" style="left:16.20px;top:637.01px;letter-spacing:-0.038px">Class name, string</div>
<div class="x" style="left:161.30px;top:637.01px;letter-spacing:-0.104px">value, thread</div>
<div class="x" style="left:265.80px;top:637.01px;letter-spacing:-0.505px">name or ID</div>
<div class="x" style="left:355.20px;top:637.01px;letter-spacing:-0.381px">(Press &quot;Enter&quot;</div>
<div class="x" style="left:460.30px;top:637.01px;letter-spacing:-0.290px">to apply</div>
<div class="x" style="left:529.00px;top:637.01px">/</div>
<div class="x" style="left:537.60px;top:637.01px;color:#1b64c6">?</div>
<div class="x" style="left:544.60px;top:637.01px;letter-spacing:-1.352px">):</div>
<div class="a" style="left:564px;top:633px;width:167px;height:27px;box-sizing:border-box;border:1px solid #c3c3c3;border-radius:3px;background:#fff"></div>
<div class="a" style="left:732px;top:632px;width:29px;height:29px;box-sizing:border-box;border:1px solid #b9b9b9;border-radius:3px;background:linear-gradient(#f6f6f6,#e4e4e4)"></div>
<svg class="i" style="left:740px;top:644px" width="13" height="6" viewBox="0 0 13 6"><path d="M0 0H13L6.5 6Z" fill="#8f8f8f"/></svg>
<div class="a" style="left:4px;top:667px;width:1610px;height:351px;border:2px solid #c9e2fb;border-radius:4px;box-sizing:border-box"></div>
<div class="a" style="left:6px;top:669px;width:1594px;height:347px;border:1px solid #9db8f8;border-radius:3px 0 0 3px;box-sizing:border-box;background:#fff;overflow:hidden">
<div class="a" style="left:0;top:0;width:1577px;height:30px;background:#f2efe4"></div>
<div class="a" style="left:0;top:30px;width:1577px;height:1px;background:#c6c6c6"></div>
</div>
<svg class="i" style="left:13.75px;top:675.9px" width="17" height="17" viewBox="0 0 17 17"><g fill="#3b83d6"><rect x="6.3" y="0.8" width="4.4" height="15.4" rx="0.8" transform="rotate(0 8.5 8.5)"/><rect x="6.3" y="0.8" width="4.4" height="15.4" rx="0.8" transform="rotate(60 8.5 8.5)"/><rect x="6.3" y="0.8" width="4.4" height="15.4" rx="0.8" transform="rotate(120 8.5 8.5)"/><circle cx="8.5" cy="8.5" r="5.7"/></g><circle cx="8.5" cy="8.5" r="3.1" fill="#f2efe4"/></svg>
<svg class="i" style="left:40px;top:676px" width="18" height="18" viewBox="0 0 18 18"><circle cx="7.65" cy="7.4" r="6.0" fill="none" stroke="#3b83d6" stroke-width="1.7"/><path d="M12.2 11.9 L15.3 15" stroke="#3b83d6" stroke-width="2.6" stroke-linecap="round"/></svg>
<div class="x" style="left:634.00px;top:676.01px;letter-spacing:-0.008px">Name</div>
<div class="x" style="left:1322.60px;top:676.01px;letter-spacing:-0.200px">Retained Size</div>
<div class="x" style="left:1474.40px;top:676.01px;letter-spacing:-0.157px">Shallow Size</div>
<svg class="i" style="left:1306px;top:683px" width="11" height="6" viewBox="0 0 11 6"><path d="M0 0H11L5.5 6Z" fill="#a9a9a9"/></svg>
<div class="hsep" style="left:1288px;top:674px;height:21px"></div>
<div class="hsep" style="left:1439px;top:674px;height:21px"></div>
<div class="a" style="left:7px;top:725px;width:1577px;height:24px;background:#f2f2f2"></div>
<div class="a" style="left:7px;top:773px;width:1577px;height:24px;background:#f2f2f2"></div>
<div class="a" style="left:7px;top:821px;width:1577px;height:24px;background:#f2f2f2"></div>
<div class="a" style="left:7px;top:869px;width:1577px;height:24px;background:#e7e7e7"></div>
<div class="a" style="left:7px;top:917px;width:1577px;height:24px;background:#f2f2f2"></div>
<div class="a" style="left:7px;top:965px;width:1577px;height:24px;background:#f2f2f2"></div>
<div class="vdot" style="left:32px;top:701px;height:314px"></div>
<svg class="i" style="left:27px;top:707px" width="11" height="11" viewBox="0 0 11 11"><rect x="0.5" y="0.5" width="10" height="10" fill="#fff" stroke="#7c7c7c" stroke-width="1"/><path d="M2.7 5.5h5.6" stroke="#111" stroke-width="1.4"/><path d="M5.5 2.7v5.6" stroke="#111" stroke-width="1.4"/></svg>
<div class="hdot" style="left:39px;top:712px;width:6px"></div>
<svg class="i" style="left:49px;top:704px" width="17" height="17" viewBox="0 0 17 17"><rect x="0.6" y="0.6" width="15.8" height="15.8" rx="3.2" fill="#fff" stroke="#9a9a9a" stroke-width="1.1"/><text x="8.4" y="13.7" text-anchor="middle" font-family='"DejaVu Sans", "Liberation Sans", sans-serif' font-size="13.6" fill="#ff7d12" stroke="#ff7d12" stroke-width="0.55">A</text></svg>
<div class="x" style="left:73.40px;top:703.01px;letter-spacing:-0.027px">java.util.HashMap$Node[128]</div>
<div class="x" style="right:177.06px;top:703.01px">422,112</div>
<div class="x" style="right:32.26px;top:703.01px">1,048</div>
<svg class="i" style="left:27px;top:731px" width="11" height="11" viewBox="0 0 11 11"><rect x="0.5" y="0.5" width="10" height="10" fill="#fff" stroke="#7c7c7c" stroke-width="1"/><path d="M2.7 5.5h5.6" stroke="#111" stroke-width="1.4"/><path d="M5.5 2.7v5.6" stroke="#111" stroke-width="1.4"/></svg>
<div class="hdot" style="left:39px;top:736px;width:6px"></div>
<div class="x" style="left:47.60px;top:727.01px;color:#7b7b7b;font-weight:bold;letter-spacing:-0.522px">[Weak/Soft Reachable]</div>
<svg class="i" style="left:238px;top:728px" width="17" height="17" viewBox="0 0 17 17"><rect x="0.6" y="0.6" width="15.8" height="15.8" rx="3.2" fill="#fff" stroke="#9a9a9a" stroke-width="1.1"/><text x="8.4" y="13.7" text-anchor="middle" font-family='"DejaVu Sans", "Liberation Sans", sans-serif' font-size="13.6" fill="#ff7d12" stroke="#ff7d12" stroke-width="0.55">A</text></svg>
<div class="x" style="left:262.00px;top:727.01px;letter-spacing:-0.032px">java.util.HashMap$Node[1024]</div>
<div class="x" style="right:177.06px;top:727.01px">262,080</div>
<div class="x" style="right:32.26px;top:727.01px">8,216</div>
<svg class="i" style="left:27px;top:755px" width="11" height="11" viewBox="0 0 11 11"><rect x="0.5" y="0.5" width="10" height="10" fill="#fff" stroke="#7c7c7c" stroke-width="1"/><path d="M2.7 5.5h5.6" stroke="#111" stroke-width="1.4"/><path d="M5.5 2.7v5.6" stroke="#111" stroke-width="1.4"/></svg>
<div class="hdot" style="left:39px;top:760px;width:6px"></div>
<svg class="i" style="left:49px;top:752px" width="17" height="17" viewBox="0 0 17 17"><rect x="0.6" y="0.6" width="15.8" height="15.8" rx="3.2" fill="#fff" stroke="#9a9a9a" stroke-width="1.1"/><text x="8.4" y="13.7" text-anchor="middle" font-family='"DejaVu Sans", "Liberation Sans", sans-serif' font-size="13.6" fill="#ff7d12" stroke="#ff7d12" stroke-width="0.55">A</text></svg>
<div class="x" style="left:73.40px;top:751.01px;letter-spacing:-0.032px">java.util.HashMap$Node[1024]</div>
<div class="x" style="right:177.06px;top:751.01px">213,848</div>
<div class="x" style="right:32.26px;top:751.01px">8,216</div>
<svg class="i" style="left:27px;top:779px" width="11" height="11" viewBox="0 0 11 11"><rect x="0.5" y="0.5" width="10" height="10" fill="#fff" stroke="#7c7c7c" stroke-width="1"/><path d="M2.7 5.5h5.6" stroke="#111" stroke-width="1.4"/><path d="M5.5 2.7v5.6" stroke="#111" stroke-width="1.4"/></svg>
<div class="hdot" style="left:39px;top:784px;width:6px"></div>
<svg class="i" style="left:49px;top:776px" width="17" height="17" viewBox="0 0 17 17"><rect x="0.6" y="0.6" width="15.8" height="15.8" rx="3.2" fill="#fff" stroke="#9a9a9a" stroke-width="1.1"/><text x="8.4" y="13.7" text-anchor="middle" font-family='"DejaVu Sans", "Liberation Sans", sans-serif' font-size="13.6" fill="#ff7d12" stroke="#ff7d12" stroke-width="0.55">A</text></svg>
<div class="x" style="left:73.40px;top:775.01px;letter-spacing:-0.027px">java.util.HashMap$Node[128]</div>
<div class="x" style="right:177.06px;top:775.01px">176,040</div>
<div class="x" style="right:32.26px;top:775.01px">1,048</div>
<svg class="i" style="left:27px;top:803px" width="11" height="11" viewBox="0 0 11 11"><rect x="0.5" y="0.5" width="10" height="10" fill="#fff" stroke="#7c7c7c" stroke-width="1"/><path d="M2.7 5.5h5.6" stroke="#111" stroke-width="1.4"/><path d="M5.5 2.7v5.6" stroke="#111" stroke-width="1.4"/></svg>
<div class="hdot" style="left:39px;top:808px;width:6px"></div>
<svg class="i" style="left:49px;top:800px" width="17" height="17" viewBox="0 0 17 17"><rect x="0.6" y="0.6" width="15.8" height="15.8" rx="3.2" fill="#fff" stroke="#9a9a9a" stroke-width="1.1"/><text x="8.4" y="13.7" text-anchor="middle" font-family='"DejaVu Sans", "Liberation Sans", sans-serif' font-size="13.6" fill="#ff7d12" stroke="#ff7d12" stroke-width="0.55">A</text></svg>
<div class="x" style="left:73.40px;top:799.01px;letter-spacing:-0.032px">java.util.HashMap$Node[1024]</div>
<div class="x" style="right:177.06px;top:799.01px">151,168</div>
<div class="x" style="right:32.26px;top:799.01px">8,216</div>
<svg class="i" style="left:27px;top:827px" width="11" height="11" viewBox="0 0 11 11"><rect x="0.5" y="0.5" width="10" height="10" fill="#fff" stroke="#7c7c7c" stroke-width="1"/><path d="M2.7 5.5h5.6" stroke="#111" stroke-width="1.4"/><path d="M5.5 2.7v5.6" stroke="#111" stroke-width="1.4"/></svg>
<div class="hdot" style="left:39px;top:832px;width:6px"></div>
<svg class="i" style="left:49px;top:824px" width="17" height="17" viewBox="0 0 17 17"><rect x="0.6" y="0.6" width="15.8" height="15.8" rx="3.2" fill="#fff" stroke="#9a9a9a" stroke-width="1.1"/><text x="8.4" y="13.7" text-anchor="middle" font-family='"DejaVu Sans", "Liberation Sans", sans-serif' font-size="13.6" fill="#ff7d12" stroke="#ff7d12" stroke-width="0.55">A</text></svg>
<div class="x" style="left:73.40px;top:823.01px;letter-spacing:-0.028px">java.util.HashMap$Node[16384]</div>
<div class="x" style="right:177.06px;top:823.01px">131,096</div>
<div class="x" style="right:32.26px;top:823.01px">131,096</div>
<svg class="i" style="left:27px;top:851px" width="11" height="11" viewBox="0 0 11 11"><rect x="0.5" y="0.5" width="10" height="10" fill="#fff" stroke="#7c7c7c" stroke-width="1"/><path d="M2.7 5.5h5.6" stroke="#111" stroke-width="1.4"/><path d="M5.5 2.7v5.6" stroke="#111" stroke-width="1.4"/></svg>
<div class="hdot" style="left:39px;top:856px;width:6px"></div>
<svg class="i" style="left:49px;top:848px" width="17" height="17" viewBox="0 0 17 17"><rect x="0.6" y="0.6" width="15.8" height="15.8" rx="3.2" fill="#fff" stroke="#9a9a9a" stroke-width="1.1"/><text x="8.4" y="13.7" text-anchor="middle" font-family='"DejaVu Sans", "Liberation Sans", sans-serif' font-size="13.6" fill="#ff7d12" stroke="#ff7d12" stroke-width="0.55">A</text></svg>
<div class="x" style="left:73.40px;top:847.01px;letter-spacing:-0.028px">java.util.HashMap$Node[16384]</div>
<div class="x" style="right:177.06px;top:847.01px">131,096</div>
<div class="x" style="right:32.26px;top:847.01px">131,096</div>
<svg class="i" style="left:27px;top:875px" width="11" height="11" viewBox="0 0 11 11"><rect x="0.5" y="0.5" width="10" height="10" fill="#fff" stroke="#7c7c7c" stroke-width="1"/><path d="M2.7 5.5h5.6" stroke="#111" stroke-width="1.4"/><path d="M5.5 2.7v5.6" stroke="#111" stroke-width="1.4"/></svg>
<div class="hdot" style="left:39px;top:880px;width:6px"></div>
<svg class="i" style="left:49px;top:872px" width="17" height="17" viewBox="0 0 17 17"><rect x="0.6" y="0.6" width="15.8" height="15.8" rx="3.2" fill="#fff" stroke="#9a9a9a" stroke-width="1.1"/><text x="8.4" y="13.7" text-anchor="middle" font-family='"DejaVu Sans", "Liberation Sans", sans-serif' font-size="13.6" fill="#ff7d12" stroke="#ff7d12" stroke-width="0.55">A</text></svg>
<div class="x" style="left:73.40px;top:871.01px;letter-spacing:-0.028px">java.util.HashMap$Node[16384]</div>
<div class="x" style="right:177.06px;top:871.01px">131,096</div>
<div class="x" style="right:32.26px;top:871.01px">131,096</div>
<svg class="i" style="left:27px;top:899px" width="11" height="11" viewBox="0 0 11 11"><rect x="0.5" y="0.5" width="10" height="10" fill="#fff" stroke="#7c7c7c" stroke-width="1"/><path d="M2.7 5.5h5.6" stroke="#111" stroke-width="1.4"/><path d="M5.5 2.7v5.6" stroke="#111" stroke-width="1.4"/></svg>
<div class="hdot" style="left:39px;top:904px;width:6px"></div>
<svg class="i" style="left:49px;top:896px" width="17" height="17" viewBox="0 0 17 17"><rect x="0.6" y="0.6" width="15.8" height="15.8" rx="3.2" fill="#fff" stroke="#9a9a9a" stroke-width="1.1"/><text x="8.4" y="13.7" text-anchor="middle" font-family='"DejaVu Sans", "Liberation Sans", sans-serif' font-size="13.6" fill="#ff7d12" stroke="#ff7d12" stroke-width="0.55">A</text></svg>
<div class="x" style="left:73.40px;top:895.01px;letter-spacing:-0.028px">java.util.HashMap$Node[16384]</div>
<div class="x" style="right:177.06px;top:895.01px">131,096</div>
<div class="x" style="right:32.26px;top:895.01px">131,096</div>
<svg class="i" style="left:27px;top:923px" width="11" height="11" viewBox="0 0 11 11"><rect x="0.5" y="0.5" width="10" height="10" fill="#fff" stroke="#7c7c7c" stroke-width="1"/><path d="M2.7 5.5h5.6" stroke="#111" stroke-width="1.4"/><path d="M5.5 2.7v5.6" stroke="#111" stroke-width="1.4"/></svg>
<div class="hdot" style="left:39px;top:928px;width:6px"></div>
<svg class="i" style="left:49px;top:920px" width="17" height="17" viewBox="0 0 17 17"><rect x="0.6" y="0.6" width="15.8" height="15.8" rx="3.2" fill="#fff" stroke="#9a9a9a" stroke-width="1.1"/><text x="8.4" y="13.7" text-anchor="middle" font-family='"DejaVu Sans", "Liberation Sans", sans-serif' font-size="13.6" fill="#ff7d12" stroke="#ff7d12" stroke-width="0.55">A</text></svg>
<div class="x" style="left:73.40px;top:919.01px;letter-spacing:-0.028px">java.util.HashMap$Node[16384]</div>
<div class="x" style="right:177.06px;top:919.01px">131,096</div>
<div class="x" style="right:32.26px;top:919.01px">131,096</div>
<svg class="i" style="left:27px;top:947px" width="11" height="11" viewBox="0 0 11 11"><rect x="0.5" y="0.5" width="10" height="10" fill="#fff" stroke="#7c7c7c" stroke-width="1"/><path d="M2.7 5.5h5.6" stroke="#111" stroke-width="1.4"/><path d="M5.5 2.7v5.6" stroke="#111" stroke-width="1.4"/></svg>
<div class="hdot" style="left:39px;top:952px;width:6px"></div>
<svg class="i" style="left:49px;top:944px" width="17" height="17" viewBox="0 0 17 17"><rect x="0.6" y="0.6" width="15.8" height="15.8" rx="3.2" fill="#fff" stroke="#9a9a9a" stroke-width="1.1"/><text x="8.4" y="13.7" text-anchor="middle" font-family='"DejaVu Sans", "Liberation Sans", sans-serif' font-size="13.6" fill="#ff7d12" stroke="#ff7d12" stroke-width="0.55">A</text></svg>
<div class="x" style="left:73.40px;top:943.01px;letter-spacing:-0.028px">java.util.HashMap$Node[16384]</div>
<div class="x" style="right:177.06px;top:943.01px">131,096</div>
<div class="x" style="right:32.26px;top:943.01px">131,096</div>
<svg class="i" style="left:27px;top:971px" width="11" height="11" viewBox="0 0 11 11"><rect x="0.5" y="0.5" width="10" height="10" fill="#fff" stroke="#7c7c7c" stroke-width="1"/><path d="M2.7 5.5h5.6" stroke="#111" stroke-width="1.4"/><path d="M5.5 2.7v5.6" stroke="#111" stroke-width="1.4"/></svg>
<div class="hdot" style="left:39px;top:976px;width:6px"></div>
<svg class="i" style="left:49px;top:968px" width="17" height="17" viewBox="0 0 17 17"><rect x="0.6" y="0.6" width="15.8" height="15.8" rx="3.2" fill="#fff" stroke="#9a9a9a" stroke-width="1.1"/><text x="8.4" y="13.7" text-anchor="middle" font-family='"DejaVu Sans", "Liberation Sans", sans-serif' font-size="13.6" fill="#ff7d12" stroke="#ff7d12" stroke-width="0.55">A</text></svg>
<div class="x" style="left:73.40px;top:967.01px;letter-spacing:-0.028px">java.util.HashMap$Node[16384]</div>
<div class="x" style="right:177.06px;top:967.01px">131,096</div>
<div class="x" style="right:32.26px;top:967.01px">131,096</div>
<svg class="i" style="left:27px;top:995px" width="11" height="11" viewBox="0 0 11 11"><rect x="0.5" y="0.5" width="10" height="10" fill="#fff" stroke="#7c7c7c" stroke-width="1"/><path d="M2.7 5.5h5.6" stroke="#111" stroke-width="1.4"/><path d="M5.5 2.7v5.6" stroke="#111" stroke-width="1.4"/></svg>
<div class="hdot" style="left:39px;top:1000px;width:6px"></div>
<svg class="i" style="left:49px;top:992px" width="17" height="17" viewBox="0 0 17 17"><rect x="0.6" y="0.6" width="15.8" height="15.8" rx="3.2" fill="#fff" stroke="#9a9a9a" stroke-width="1.1"/><text x="8.4" y="13.7" text-anchor="middle" font-family='"DejaVu Sans", "Liberation Sans", sans-serif' font-size="13.6" fill="#ff7d12" stroke="#ff7d12" stroke-width="0.55">A</text></svg>
<div class="x" style="left:73.40px;top:991.01px;letter-spacing:-0.028px">java.util.HashMap$Node[16384]</div>
<div class="x" style="right:177.06px;top:991.01px">131,096</div>
<div class="x" style="right:32.26px;top:991.01px">131,096</div>
<div class="a" style="left:1584px;top:701px;width:15px;height:314px;background:#f8f8f8;border-left:1px solid #e6e6e6;box-sizing:border-box"></div>
<div class="a" style="left:1587px;top:703px;width:11px;height:65px;background:linear-gradient(to right,#c2c2c2,#e9e9e9 22%,#dddddd 60%,#c4c4c4);border-radius:2.5px"></div>
<div class="a" style="left:0;top:1018px;width:1600px;height:2px;background:#e9e9e9"></div>
<div class="a" style="left:0;top:1020px;width:1600px;height:1px;background:#d4ebf2"></div>
</div></body></html>
